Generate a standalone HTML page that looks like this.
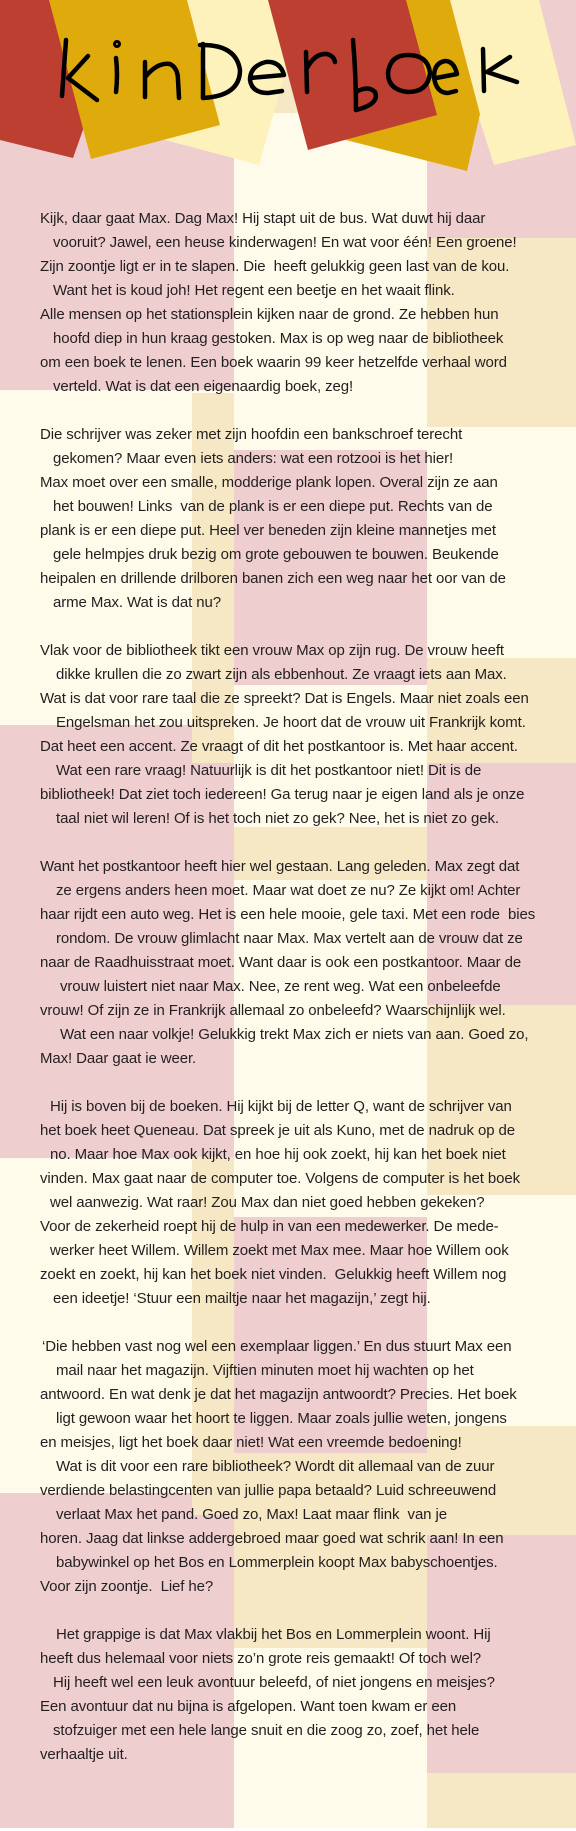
<!DOCTYPE html>
<html><head><meta charset="utf-8"><style>
html,body{margin:0;padding:0}
body{width:576px;height:1831px;position:relative;overflow:hidden;background:#fff;font-family:"Liberation Sans",Arial,sans-serif;}
svg.bg{position:absolute;left:0;top:0}
.t{position:absolute;left:0;top:0;width:576px;font-size:15px;color:#231f20;letter-spacing:-0.1px;word-spacing:0px}
.t div{position:absolute;height:24px;line-height:24px;white-space:pre}
</style></head><body>
<svg class="bg" width="576" height="1831" viewBox="0 0 576 1831">
<rect x="0" y="0" width="576" height="1828" fill="#fefbeb"/>
<rect x="0" y="0" width="234" height="390" fill="#eecece"/>
<rect x="0" y="725" width="234" height="433" fill="#eecece"/>
<rect x="0" y="1493" width="234" height="335" fill="#eecece"/>
<rect x="192" y="393" width="42" height="370" fill="#f6e8c4"/>
<rect x="192" y="1157" width="42" height="358" fill="#f6e8c4"/>
<rect x="234" y="0" width="193" height="113" fill="#f6e8c4"/>
<rect x="234" y="450" width="193" height="235" fill="#eecece"/>
<rect x="234" y="827" width="193" height="53" fill="#f6e8c4"/>
<rect x="234" y="1217" width="193" height="236" fill="#eecece"/>
<rect x="234" y="1453" width="193" height="195" fill="#f6e8c4"/>
<rect x="427" y="0" width="149" height="238" fill="#eecece"/>
<rect x="427" y="238" width="149" height="189" fill="#f6e8c4"/>
<rect x="427" y="658" width="149" height="105" fill="#f6e8c4"/>
<rect x="427" y="763" width="149" height="242" fill="#eecece"/>
<rect x="427" y="1005" width="149" height="190" fill="#f6e8c4"/>
<rect x="427" y="1426" width="149" height="109" fill="#f6e8c4"/>
<rect x="427" y="1535" width="149" height="238" fill="#eecece"/>
<rect x="427" y="1773" width="149" height="55" fill="#f6e8c4"/>
<polygon points="0,0 50,0 84,127 73,158 0,140" fill="#bc3f31"/>
<polygon points="187,0 282,0 290,55 259,165 165,140" fill="#fef2bc"/>
<polygon points="49,0 187,0 220,125 91,159" fill="#dfab0c"/>
<polygon points="450,0 539,0 576,145 494,165 478,115" fill="#fef2bc"/>
<polygon points="406,0 450,0 480,114 467,171 346,140" fill="#dfab0c"/>
<polygon points="268,0 406,0 437,115 308,150" fill="#bc3f31"/>
<g fill="none" stroke="#000" stroke-width="4.5" stroke-linecap="round" stroke-linejoin="round">
<path d="M66,40 L62,96"/>
<path d="M88,56 L68,78 L97,100"/>
<circle cx="117" cy="44" r="2.5" stroke-width="3"/>
<path d="M116,58 Q118,75 116,92"/>
<path d="M145,62 L145,97"/>
<path d="M146,76 Q158,62 170,64 Q178,68 178,80 L179,98"/>
<path d="M203,44 L203,98"/>
<path d="M200,45 Q236,44 240,70 Q240,96 203,98"/>
<path d="M250,78 L284,75 Q280,61 266,62 Q250,66 250,80 Q252,93 268,93 L282,91"/>
<path d="M306,52 L307,92"/>
<path d="M307,68 Q315,53 327,54 Q334,56 335,62"/>
<path d="M353,40 Q356,75 356,110"/>
<path d="M356,92 Q368,85 375,92 Q380,104 356,110"/>
<path d="M408,55 Q428,55 430,73 Q428,92 408,92 Q388,90 388,73 Q390,55 408,55"/>
<path d="M436,78 L457,74 Q454,61 445,61 Q434,63 434,77 Q436,93 448,93 L456,91"/>
<path d="M483,49 L484,91"/>
<path d="M510,57 L487,72 L517,82"/>
</g>
<rect x="0" y="1828" width="576" height="3" fill="#fff"/>
</svg>
<div class="t">
<div style="left:40px;top:207px">Kijk, daar gaat Max. Dag Max! Hij stapt uit de bus. Wat duwt hij daar</div>
<div style="left:53px;top:231px">vooruit? Jawel, een heuse kinderwagen! En wat voor één! Een groene!</div>
<div style="left:40px;top:255px">Zijn zoontje ligt er in te slapen. Die  heeft gelukkig geen last van de kou.</div>
<div style="left:53px;top:279px">Want het is koud joh! Het regent een beetje en het waait flink.</div>
<div style="left:40px;top:303px">Alle mensen op het stationsplein kijken naar de grond. Ze hebben hun</div>
<div style="left:53px;top:327px">hoofd diep in hun kraag gestoken. Max is op weg naar de bibliotheek</div>
<div style="left:40px;top:351px">om een boek te lenen. Een boek waarin 99 keer hetzelfde verhaal word</div>
<div style="left:53px;top:375px">verteld. Wat is dat een eigenaardig boek, zeg!</div>

<div style="left:40px;top:423px">Die schrijver was zeker met zijn hoofdin een bankschroef terecht</div>
<div style="left:53px;top:447px">gekomen? Maar even iets anders: wat een rotzooi is het hier!</div>
<div style="left:40px;top:471px">Max moet over een smalle, modderige plank lopen. Overal zijn ze aan</div>
<div style="left:53px;top:495px">het bouwen! Links  van de plank is er een diepe put. Rechts van de</div>
<div style="left:40px;top:519px">plank is er een diepe put. Heel ver beneden zijn kleine mannetjes met</div>
<div style="left:53px;top:543px">gele helmpjes druk bezig om grote gebouwen te bouwen. Beukende</div>
<div style="left:40px;top:567px">heipalen en drillende drilboren banen zich een weg naar het oor van de</div>
<div style="left:53px;top:591px">arme Max. Wat is dat nu?</div>

<div style="left:40px;top:639px">Vlak voor de bibliotheek tikt een vrouw Max op zijn rug. De vrouw heeft</div>
<div style="left:56px;top:663px">dikke krullen die zo zwart zijn als ebbenhout. Ze vraagt iets aan Max.</div>
<div style="left:40px;top:687px">Wat is dat voor rare taal die ze spreekt? Dat is Engels. Maar niet zoals een</div>
<div style="left:56px;top:711px">Engelsman het zou uitspreken. Je hoort dat de vrouw uit Frankrijk komt.</div>
<div style="left:40px;top:735px">Dat heet een accent. Ze vraagt of dit het postkantoor is. Met haar accent.</div>
<div style="left:56px;top:759px">Wat een rare vraag! Natuurlijk is dit het postkantoor niet! Dit is de</div>
<div style="left:40px;top:783px">bibliotheek! Dat ziet toch iedereen! Ga terug naar je eigen land als je onze</div>
<div style="left:56px;top:807px">taal niet wil leren! Of is het toch niet zo gek? Nee, het is niet zo gek.</div>

<div style="left:40px;top:855px">Want het postkantoor heeft hier wel gestaan. Lang geleden. Max zegt dat</div>
<div style="left:56px;top:879px">ze ergens anders heen moet. Maar wat doet ze nu? Ze kijkt om! Achter</div>
<div style="left:40px;top:903px">haar rijdt een auto weg. Het is een hele mooie, gele taxi. Met een rode  bies</div>
<div style="left:56px;top:927px">rondom. De vrouw glimlacht naar Max. Max vertelt aan de vrouw dat ze</div>
<div style="left:40px;top:951px">naar de Raadhuisstraat moet. Want daar is ook een postkantoor. Maar de</div>
<div style="left:60px;top:975px">vrouw luistert niet naar Max. Nee, ze rent weg. Wat een onbeleefde</div>
<div style="left:40px;top:999px">vrouw! Of zijn ze in Frankrijk allemaal zo onbeleefd? Waarschijnlijk wel.</div>
<div style="left:60px;top:1023px">Wat een naar volkje! Gelukkig trekt Max zich er niets van aan. Goed zo,</div>
<div style="left:40px;top:1047px">Max! Daar gaat ie weer.</div>

<div style="left:50px;top:1095px">Hij is boven bij de boeken. Hij kijkt bij de letter Q, want de schrijver van</div>
<div style="left:40px;top:1119px">het boek heet Queneau. Dat spreek je uit als Kuno, met de nadruk op de</div>
<div style="left:50px;top:1143px">no. Maar hoe Max ook kijkt, en hoe hij ook zoekt, hij kan het boek niet</div>
<div style="left:40px;top:1167px">vinden. Max gaat naar de computer toe. Volgens de computer is het boek</div>
<div style="left:50px;top:1191px">wel aanwezig. Wat raar! Zou Max dan niet goed hebben gekeken?</div>
<div style="left:40px;top:1215px">Voor de zekerheid roept hij de hulp in van een medewerker. De mede-</div>
<div style="left:50px;top:1239px">werker heet Willem. Willem zoekt met Max mee. Maar hoe Willem ook</div>
<div style="left:40px;top:1263px">zoekt en zoekt, hij kan het boek niet vinden.  Gelukkig heeft Willem nog</div>
<div style="left:53px;top:1287px">een ideetje! ‘Stuur een mailtje naar het magazijn,’ zegt hij.</div>

<div style="left:42px;top:1335px">‘Die hebben vast nog wel een exemplaar liggen.’ En dus stuurt Max een</div>
<div style="left:56px;top:1359px">mail naar het magazijn. Vijftien minuten moet hij wachten op het</div>
<div style="left:40px;top:1383px">antwoord. En wat denk je dat het magazijn antwoordt? Precies. Het boek</div>
<div style="left:56px;top:1407px">ligt gewoon waar het hoort te liggen. Maar zoals jullie weten, jongens</div>
<div style="left:40px;top:1431px">en meisjes, ligt het boek daar niet! Wat een vreemde bedoening!</div>
<div style="left:56px;top:1455px">Wat is dit voor een rare bibliotheek? Wordt dit allemaal van de zuur</div>
<div style="left:40px;top:1479px">verdiende belastingcenten van jullie papa betaald? Luid schreeuwend</div>
<div style="left:56px;top:1503px">verlaat Max het pand. Goed zo, Max! Laat maar flink  van je</div>
<div style="left:40px;top:1527px">horen. Jaag dat linkse addergebroed maar goed wat schrik aan! In een</div>
<div style="left:56px;top:1551px">babywinkel op het Bos en Lommerplein koopt Max babyschoentjes.</div>
<div style="left:40px;top:1575px">Voor zijn zoontje.  Lief he?</div>

<div style="left:56px;top:1623px">Het grappige is dat Max vlakbij het Bos en Lommerplein woont. Hij</div>
<div style="left:40px;top:1647px">heeft dus helemaal voor niets zo’n grote reis gemaakt! Of toch wel?</div>
<div style="left:53px;top:1671px">Hij heeft wel een leuk avontuur beleefd, of niet jongens en meisjes?</div>
<div style="left:40px;top:1695px">Een avontuur dat nu bijna is afgelopen. Want toen kwam er een</div>
<div style="left:53px;top:1719px">stofzuiger met een hele lange snuit en die zoog zo, zoef, het hele</div>
<div style="left:40px;top:1743px">verhaaltje uit.</div>
</div>
</body></html>
